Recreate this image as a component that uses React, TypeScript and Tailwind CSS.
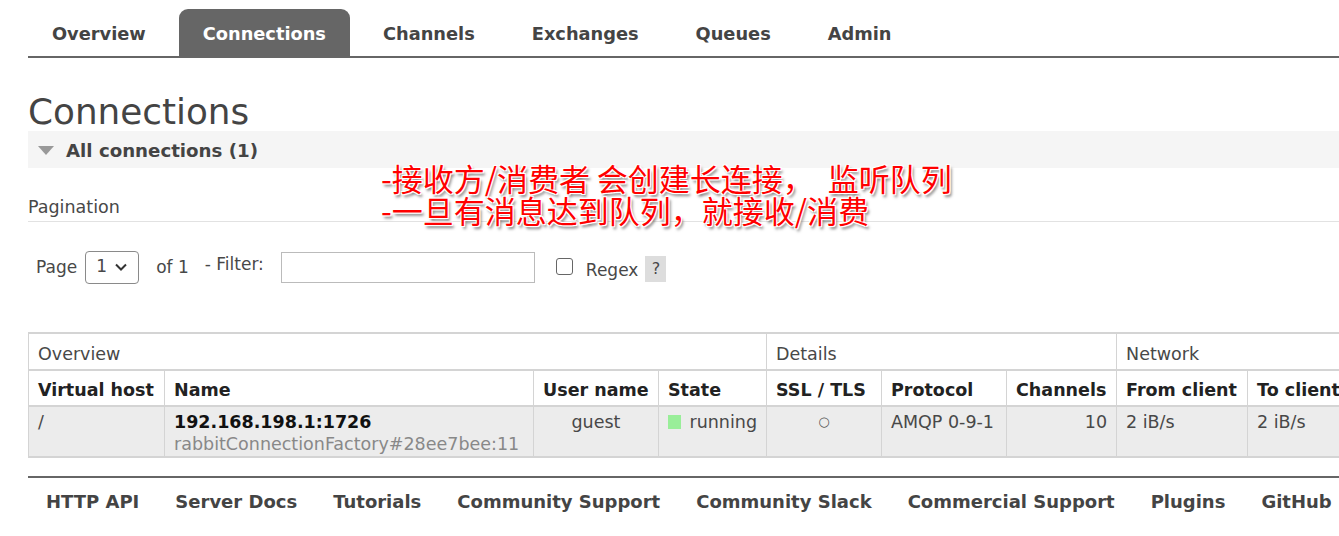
const tabs = ["Overview", "Connections", "Channels", "Exchanges", "Queues", "Admin"];
const footerLinks = [
  "HTTP API",
  "Server Docs",
  "Tutorials",
  "Community Support",
  "Community Slack",
  "Commercial Support",
  "Plugins",
  "GitHub",
];

// shared cell look; alignment is added per cell
const cell = "border border-[#d4d4d4] px-[9px]";
const head = cell + " text-left align-middle border-t-2 pt-[5px]";
const data = cell + " align-top border-y-2 pt-[4px] pb-[1px]";

export default function App() {
  return (
    <div className="relative w-[1339px] h-[536px] overflow-hidden bg-white font-['DejaVu_Sans',Verdana,sans-serif] text-[#484848] text-[17.5px]">
      <div className="w-[1500px] pl-[28px]">
        {/* top nav */}
        <nav className="pt-[9px] border-b-2 border-[#666] w-[1472px]">
          <ul className="flex gap-[9px]">
            {tabs.map((t) => (
              <li
                key={t}
                className={
                  "h-[47px] px-6 pt-[3px] flex items-center font-bold text-[17.8px] rounded-t-[9px] " +
                  (t === "Connections" ? "bg-[#666] text-white" : "text-[#444]")
                }
              >
                {t}
              </li>
            ))}
          </ul>
        </nav>

        <h1 className="mt-[35px] text-[35.8px] leading-[37px] text-[#444]">Connections</h1>

        <div className="mt-px h-[37px] bg-[#f5f5f5] flex items-center gap-[12px] pl-[10px] pt-[2px] font-bold text-[18.2px] text-[#444]">
          <span className="w-0 h-0 border-l-[8px] border-r-[8px] border-t-[9px] border-l-transparent border-r-transparent border-t-[#999]" />
          <span>All connections (1)</span>
        </div>

        <div className="mt-[28px] pb-[3px] leading-[22px] border-b border-[#e2e2e2]">Pagination</div>

        {/* filter row */}
        <div className="mt-[28px] flex items-center h-[34px] pl-[8px] text-[17px]">
          <span className="mt-[2px]">Page</span>
          <div className="ml-[8px] w-[54px] h-[33px] border border-[#8a8a8a] rounded-[4px] flex items-center justify-between px-[10px]">
            <span>1</span>
            <svg width="14" height="10" viewBox="0 0 14 10" fill="none" stroke="#333" strokeWidth="2">
              <path d="M2 2.5 L7 7.5 L12 2.5" />
            </svg>
          </div>
          <span className="ml-[17px] mt-[2px]">of 1</span>
          <span className="ml-[16px] mb-[4px]">- Filter:</span>
          <div className="ml-[17px] w-[254px] h-[31px] border border-[#bbb]" />
          <div className="ml-[21px] mt-[8px] w-[17px] h-[17px] border border-[#666] rounded-[3px] self-start" />
          <span className="ml-[13px] mt-[8px]">Regex</span>
          <span className="ml-[7px] mt-[6px] self-start w-[21px] h-[26px] bg-[#ddd] flex items-center justify-center text-[16px]">?</span>
        </div>

        {/* table */}
        <table className="mt-[48px] border-collapse table-fixed w-[1460px]">
          <colgroup>
            <col className="w-[136px]" />
            <col className="w-[369px]" />
            <col className="w-[125px]" />
            <col className="w-[108px]" />
            <col className="w-[115px]" />
            <col className="w-[125px]" />
            <col className="w-[110px]" />
            <col className="w-[131px]" />
            <col className="w-[241px]" />
          </colgroup>
          <thead>
            <tr className="h-[37px]">
              <th colSpan={4} className={head + " font-normal"}>Overview</th>
              <th colSpan={3} className={head + " font-normal"}>Details</th>
              <th colSpan={2} className={head + " font-normal"}>Network</th>
            </tr>
            <tr className="h-[36px] font-bold text-[#222]">
              <th className={head + " px-[8px] whitespace-nowrap"}>Virtual host</th>
              <th className={head}>Name</th>
              <th className={head + " px-[8px]"}>User name</th>
              <th className={head}>State</th>
              <th className={head + " px-[8px] whitespace-nowrap"}>SSL / TLS</th>
              <th className={head}>Protocol</th>
              <th className={head + " px-[8px]"}>Channels</th>
              <th className={head + " px-[8px] whitespace-nowrap"}>From client</th>
              <th className={head + " px-[8px] whitespace-nowrap"}>To client</th>
            </tr>
          </thead>
          <tbody>
            <tr className="bg-[#ececec] leading-[22px]">
              <td className={data + " text-left"}>/</td>
              <td className={data + " text-left"}>
                <div className="font-bold text-[#111]">192.168.198.1:1726</div>
                <div className="text-[#888] whitespace-nowrap">rabbitConnectionFactory#28ee7bee:11</div>
              </td>
              <td className={data + " text-center"}>guest</td>
              <td className={data + " px-[8px]"}>
                <span className="flex items-center gap-[8px]">
                  <span className="w-[14px] h-[14px] bg-[#99ee99]" />
                  running
                </span>
              </td>
              <td className={data + " text-center text-[13px] text-[#555]"}>○</td>
              <td className={data + " text-left whitespace-nowrap"}>AMQP 0-9-1</td>
              <td className={data + " text-right px-[8px]"}>10</td>
              <td className={data + " text-left px-[8px]"}>2 iB/s</td>
              <td className={data + " text-left px-[8px]"}>2 iB/s</td>
            </tr>
          </tbody>
        </table>

        {/* footer */}
        <div className="mt-[18px] border-t-2 border-[#666] w-[1472px]">
          <ul className="mt-[13px] flex font-bold text-[18px] text-[#444] leading-[22px]">
            {footerLinks.map((l) => (
              <li key={l} className="px-[18px] whitespace-nowrap">
                {l}
              </li>
            ))}
          </ul>
        </div>
      </div>

      {/* red annotation pasted over the page */}
      <p className="absolute left-[381px] top-[162px] text-[31px] leading-[32px] text-[#f00] whitespace-pre font-['Noto_Sans_CJK_SC',sans-serif] [text-shadow:1px_1px_0_#fff,-1px_-1px_0_#fff,1px_-1px_0_#fff,-1px_1px_0_#fff,2px_3px_3px_#777]">
        {"-接收方/消费者 会创建长连接，  监听队列"}
        <br />
        {"-一旦有消息达到队列，就接收/消费"}
      </p>
    </div>
  );
}
